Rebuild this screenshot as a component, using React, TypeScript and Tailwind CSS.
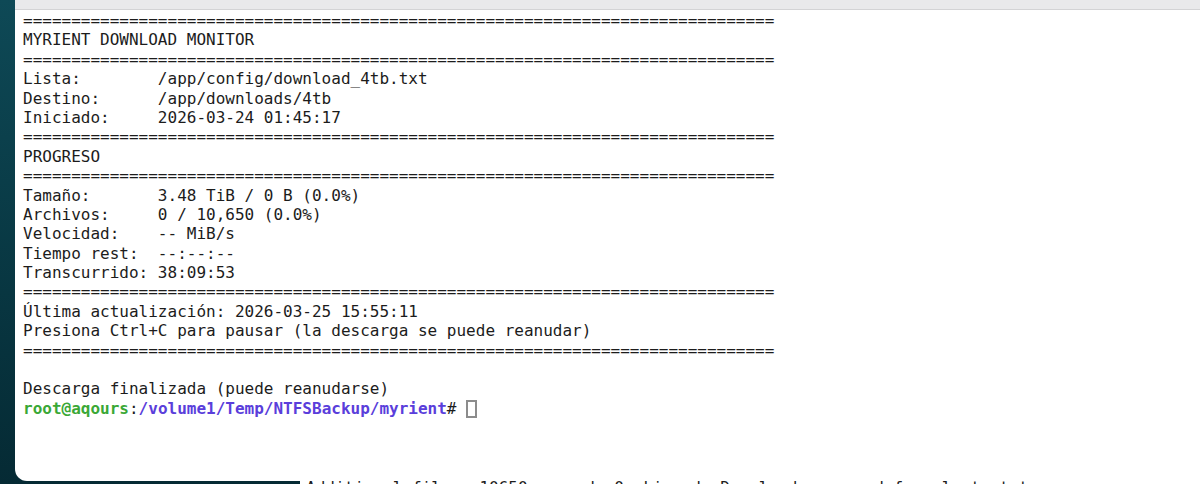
const RULE = '='.repeat(78);

const field = (label: string, value: string) => label.padEnd(14, ' ') + value;

const lines: string[] = [
  RULE,
  'MYRIENT DOWNLOAD MONITOR',
  RULE,
  field('Lista:', '/app/config/download_4tb.txt'),
  field('Destino:', '/app/downloads/4tb'),
  field('Iniciado:', '2026-03-24 01:45:17'),
  RULE,
  'PROGRESO',
  RULE,
  field('Tamaño:', '3.48 TiB / 0 B (0.0%)'),
  field('Archivos:', '0 / 10,650 (0.0%)'),
  field('Velocidad:', '-- MiB/s'),
  field('Tiempo rest:', '--:--:--'),
  field('Transcurrido:', '38:09:53'),
  RULE,
  'Última actualización: 2026-03-25 15:55:11',
  'Presiona Ctrl+C para pausar (la descarga se puede reanudar)',
  RULE,
  '',
  'Descarga finalizada (puede reanudarse)',
];

export default function App() {
  return (
    <div className="w-[1200px] h-[484px] overflow-hidden flex flex-col bg-gradient-to-b from-[#0e4956] to-[#052a34]">
      {/* terminal window */}
      <div className="ml-[15px] h-[481px] shrink-0 bg-white rounded-bl-[12px] flex flex-col overflow-hidden">
        <div className="h-[10px] shrink-0 bg-[#e9e9eb] border-b border-[#d3d3d5]" />
        <div className="pl-[8px] pt-[1px] font-['DejaVu_Sans_Mono',monospace] text-[16px] leading-[19.4px] text-[#1c1c1c] whitespace-pre">
          {lines.map((line, i) => (
            <div key={i} className="h-[19.4px]">
              {line}
            </div>
          ))}
          <div className="h-[19.4px] flex items-center">
            <span className="font-bold text-[#3aa836]">root@aqours</span>
            <span>:</span>
            <span className="font-bold text-[#5a3edb]">/volume1/Temp/NTFSBackup/myrient</span>
            <span># </span>
            <span className="inline-block w-[11px] h-[18px] border-2 border-[#8c8c8c]" />
          </div>
        </div>
      </div>

      {/* window behind, mostly hidden */}
      <div className="h-[3px] flex">
        <div className="w-[300px] shrink-0" />
        <div className="flex-1 bg-white overflow-hidden">
          <div className="font-['DejaVu_Sans_Mono',monospace] text-[16px] leading-[16px] -mt-[1px] pl-[6px] text-[#1c1c1c] whitespace-pre">
            Additional files: 10650 queued, 0 skipped. Downloads resumed from last state.
          </div>
        </div>
      </div>
    </div>
  );
}
